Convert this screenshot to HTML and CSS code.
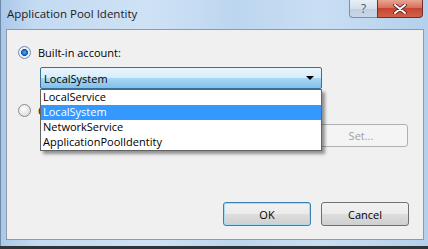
FILE: index.html
```html
<!DOCTYPE html>
<html lang="en">
<head>
    <meta charset="UTF-8">
    <title>Application Pool Identity</title>
    <link rel="stylesheet" href="styles.css">
</head>
<body>
    <div class="window">
        <div class="titlebar">
            <span class="title">Application Pool Identity</span>
            <div class="caption-buttons">
                <div class="btn-help">?</div>
                <div class="btn-close">
                    <svg width="14" height="10" viewBox="0 0 14 10">
                        <path d="M2 1 L12 9 M12 1 L2 9" stroke="#5a1e1e" stroke-width="3.6" stroke-linecap="round"/>
                        <path d="M2 1 L12 9 M12 1 L2 9" stroke="#ffffff" stroke-width="2" stroke-linecap="round"/>
                    </svg>
                </div>
            </div>
        </div>

        <div class="panel">
            <div class="option">
                <span class="radio checked"></span>
                <span class="label">Built-in account:</span>
            </div>

            <div class="combo-wrap">
                <div class="combo">
                    <span>LocalSystem</span>
                    <span class="arrow"></span>
                </div>
                <ul class="dropdown">
                    <li>LocalService</li>
                    <li class="selected">LocalSystem</li>
                    <li>NetworkService</li>
                    <li>ApplicationPoolIdentity</li>
                </ul>
            </div>

            <div class="option custom">
                <span class="radio"></span>
                <span class="label">Custom account:</span>
            </div>
            <div class="custom-row">
                <div class="textbox"></div>
                <button class="button disabled">Set...</button>
            </div>

            <div class="actions">
                <button class="button default">OK</button>
                <button class="button">Cancel</button>
            </div>
        </div>
        <div class="bottom-edge"></div>
    </div>
</body>
</html>
```

FILE: styles.css
```css
body {
    margin: 0;
    padding: 0;
    font-family: "Open Sans", "Noto Sans", sans-serif;
    font-size: 11px;
    color: #000000;
    background-color: #2f3438;
}

.window {
    width: 428px;
    height: 246px;
    display: flex;
    flex-direction: column;
    background: linear-gradient(90deg, #a9c8e8 0%, #c3daf1 8%, #cfe2f5 35%, #bcd6ef 55%, #c9def3 75%, #b5d0ec 100%);
    box-shadow: inset 1px 0 0 #6f8aa8;
}

.titlebar {
    height: 29px;
    position: relative;
    display: flex;
}

.title {
    margin: 6px 0 0 7px;
    font-size: 11.5px;
    color: #1c1c1c;
}

.caption-buttons {
    position: absolute;
    top: 0;
    right: 5px;
    display: flex;
}

.btn-help {
    width: 27px;
    height: 17px;
    border: 1px solid #7b8fa6;
    border-top: none;
    border-right: none;
    border-radius: 0 0 0 4px;
    background: linear-gradient(#e8eff7 0%, #d3dfec 50%, #bfcfe0 51%, #c9d8e8 100%);
    color: #4a5a70;
    font-size: 12px;
    text-align: center;
    line-height: 17px;
}

.btn-close {
    width: 44px;
    height: 17px;
    border: 1px solid #6e2f2f;
    border-top: none;
    border-radius: 0 0 4px 0;
    background: linear-gradient(#e8a593 0%, #d8705b 45%, #c7442f 50%, #d0624a 100%);
    display: flex;
    align-items: center;
    justify-content: center;
}

.panel {
    position: relative;
    margin-left: 6px;
    width: 416px;
    height: 209px;
    border: 1px solid #8f9aa6;
    background-color: #f0f0f0;
}

.bottom-edge {
    height: 6px;
}

.option {
    display: flex;
    align-items: center;
    height: 14px;
    margin-top: 15px;
    padding-left: 11px;
}

.option .label {
    margin-left: 7px;
}

.radio {
    width: 11px;
    height: 11px;
    border: 1px solid #8a8a8a;
    border-radius: 50%;
    background: radial-gradient(circle at 40% 35%, #ffffff 0%, #e4e4e4 60%, #cfcfcf 100%);
}

.radio.checked {
    background: radial-gradient(circle, #4fb0ff 0%, #1a64c4 32%, #134f99 42%, #f4f4f4 48%, #dcdcdc 100%);
    border-color: #6f8cb0;
}

.combo-wrap {
    position: relative;
    margin: 8px 0 0 33px;
    width: 282px;
}

.combo {
    height: 20px;
    border: 1px solid #3c6f97;
    border-radius: 2px;
    background: linear-gradient(#e9f5fd 0%, #d6edfb 48%, #a8d7f4 52%, #7fc0ea 100%);
    display: flex;
    align-items: center;
    justify-content: space-between;
    padding: 0 7px 0 3px;
}

.arrow {
    width: 0;
    height: 0;
    border-left: 4px solid transparent;
    border-right: 4px solid transparent;
    border-top: 4px solid #000000;
}

/* open list, drawn over the custom account row */
.dropdown {
    position: absolute;
    top: 22px;
    left: 0;
    width: 280px;
    margin: 0;
    padding: 0;
    list-style: none;
    background-color: #ffffff;
    border: 1px solid #646464;
    box-shadow: 3px 3px 3px rgba(0, 0, 0, 0.4);
    z-index: 2;
}

.dropdown li {
    height: 15px;
    line-height: 14px;
    padding-left: 2px;
}

.dropdown li.selected {
    background-color: #3399ff;
    color: #ffffff;
}

.option.custom {
    margin-top: 14px;
}

.custom-row {
    display: flex;
    justify-content: flex-end;
    margin: 7px 15px 0 33px;
    gap: 6px;
}

.textbox {
    flex: 1;
    height: 21px;
    border: 1px solid #abadb3;
    background-color: #ffffff;
}

.button {
    font-family: "Open Sans", "Noto Sans", sans-serif;
    font-size: 11px;
    height: 24px;
    width: 88px;
    border: 1px solid #707070;
    border-radius: 3px;
    background: linear-gradient(#f2f2f2 0%, #ebebeb 48%, #dddddd 52%, #cfcfcf 100%);
    color: #000000;
    padding: 0;
}

.button.disabled {
    width: 94px;
    height: 23px;
    border-color: #adb2b5;
    background: #f4f4f4;
    color: #a0a0a0;
}

.button.default {
    border-color: #3c7fb1;
    box-shadow: inset 0 0 0 1px #a6dcf5;
}

.actions {
    position: absolute;
    right: 14px;
    bottom: 13px;
    display: flex;
    gap: 10px;
}
```
